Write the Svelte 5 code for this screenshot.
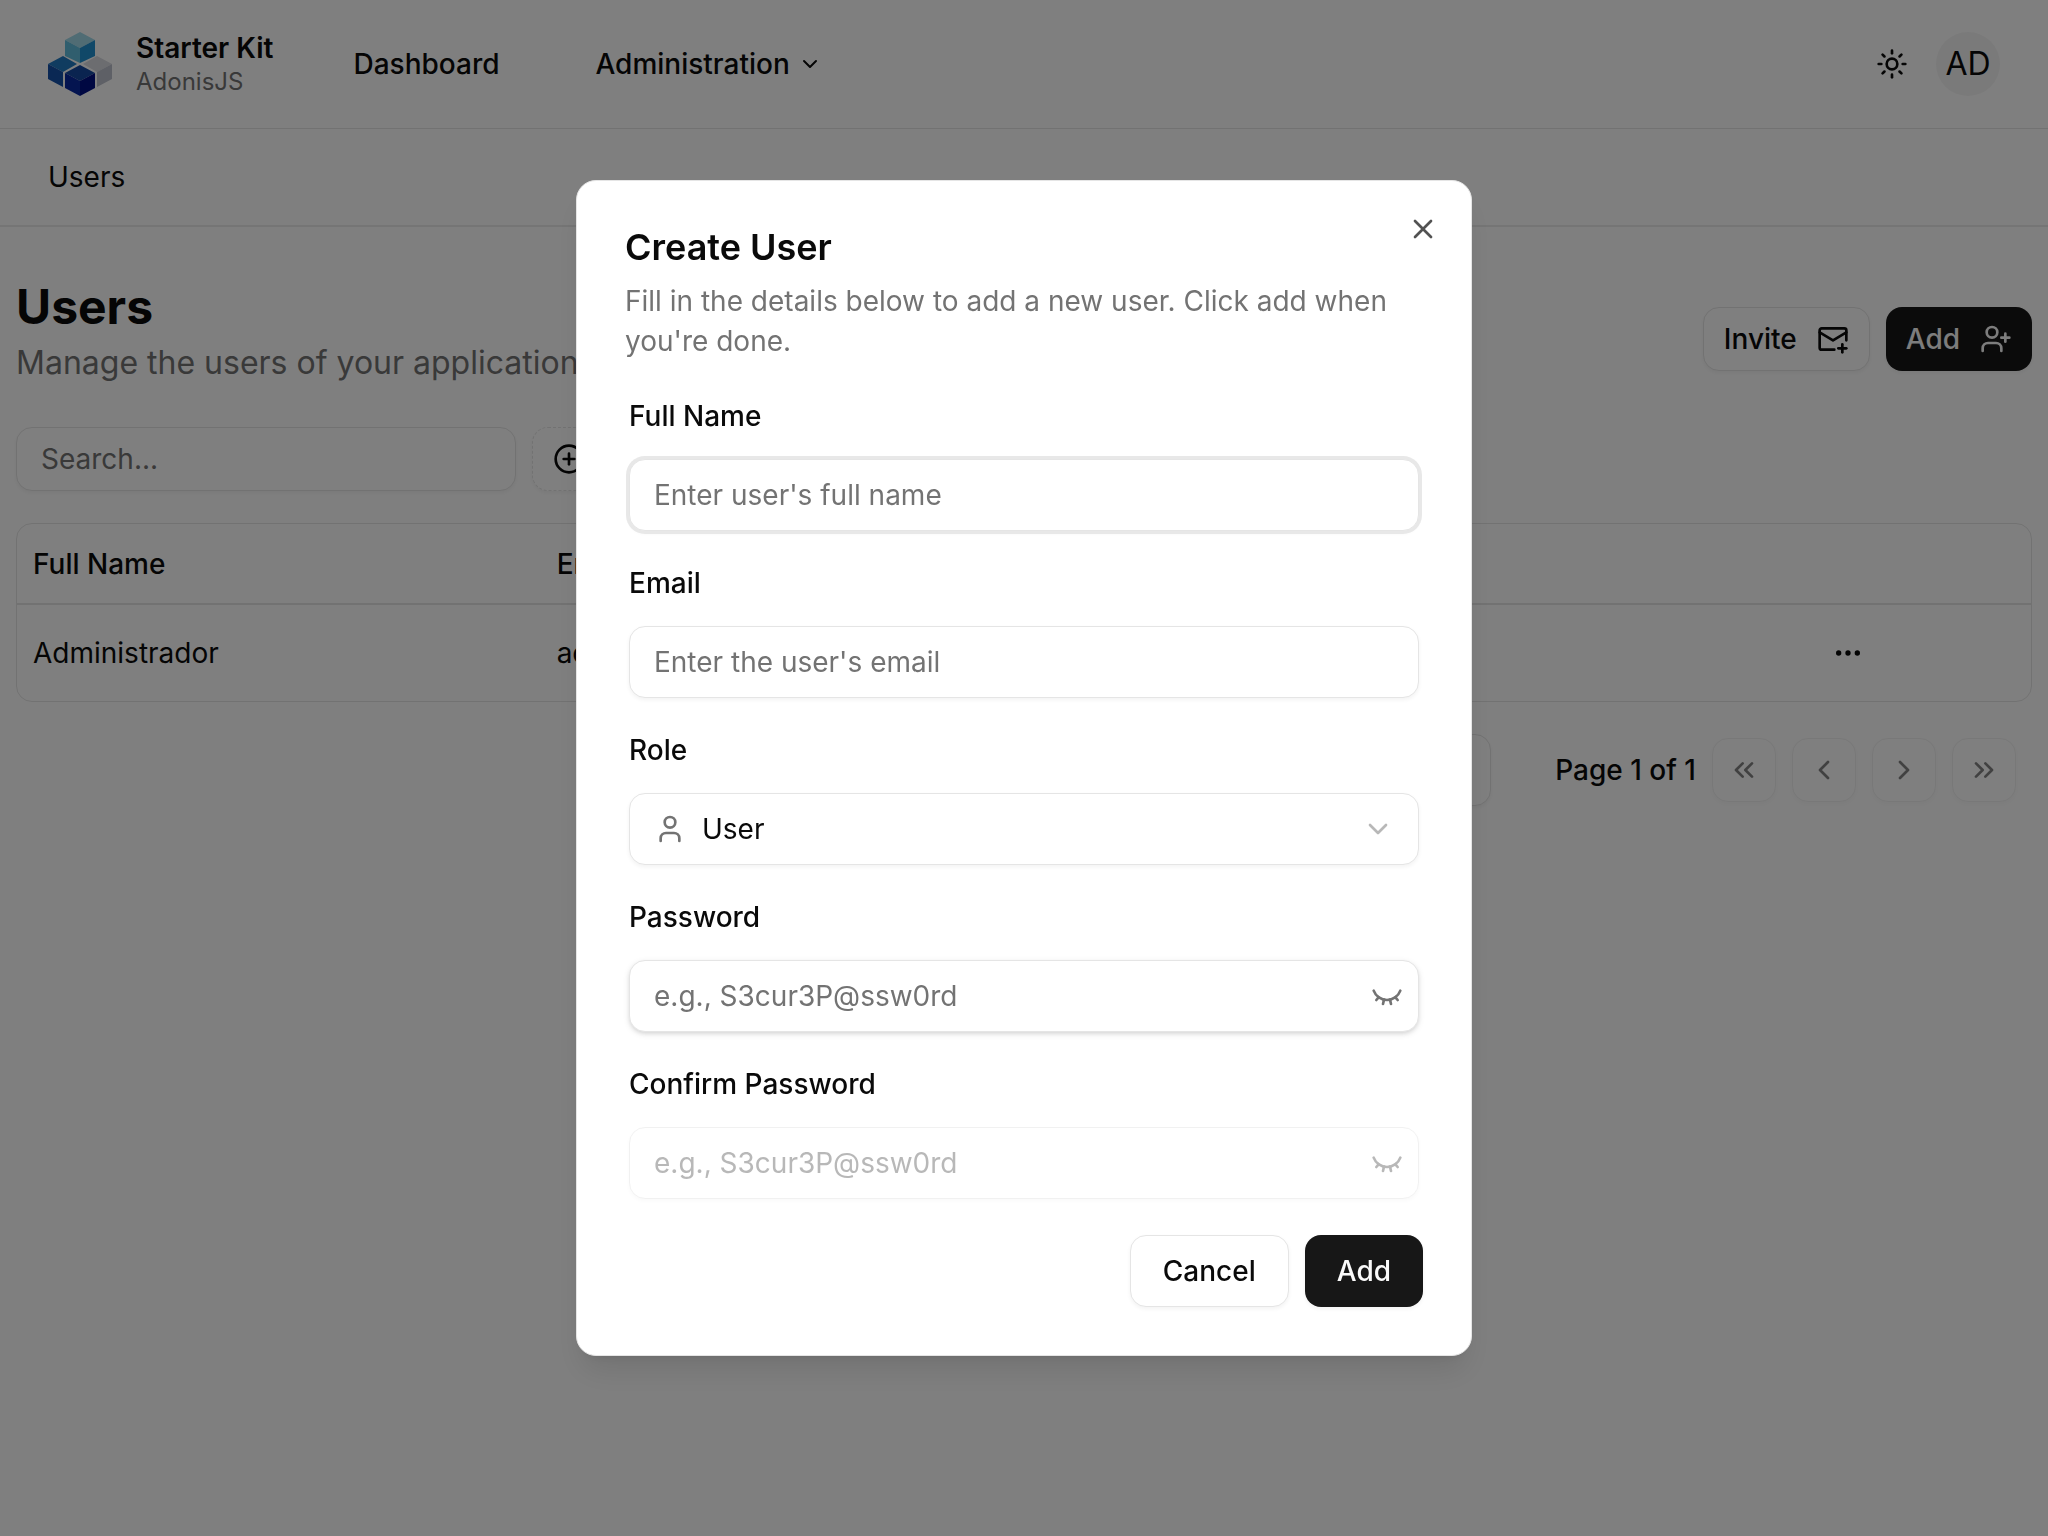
<script lang="ts">
	const navLinks = [
		{ label: 'Dashboard', menu: false },
		{ label: 'Administration', menu: true }
	];

	const users = [{ name: 'Administrador', email: 'admin@adonisjs.com', role: 'Admin' }];

	const pageButtons = [
		{ label: 'First page', paths: ['m11 17-5-5 5-5', 'm18 17-5-5 5-5'] },
		{ label: 'Previous page', paths: ['m15 18-6-6 6-6'] },
		{ label: 'Next page', paths: ['m9 18 6-6-6-6'] },
		{ label: 'Last page', paths: ['m6 17 5-5-5-5', 'm13 17 5-5-5-5'] }
	];

	const icons = {
		chevronDown: ['m6 9 6 6 6-6'],
		sun: [
			'M8 12a4 4 0 1 0 8 0 4 4 0 1 0-8 0',
			'M12 2v2',
			'M12 20v2',
			'm4.93 4.93 1.41 1.41',
			'm17.66 17.66 1.41 1.41',
			'M2 12h2',
			'M20 12h2',
			'm6.34 17.66-1.41 1.41',
			'm19.07 4.93-1.41 1.41'
		],
		mailPlus: [
			'M22 13V5.500a1.500 1.500 0 0 0-1.500-1.500H3.500a1.500 1.500 0 0 0-1.500 1.500V18.500a1.500 1.500 0 0 0 1.500 1.500H13',
			'm22 7-10 6L2 7',
			'M19 16v6',
			'M16 19h6'
		],
		userPlus: [
			'M16 21v-2a4 4 0 0 0-4-4H6a4 4 0 0 0-4 4v2',
			'M5 7a4 4 0 1 0 8 0 4 4 0 1 0-8 0',
			'M19 8v6',
			'M22 11h-6'
		],
		user: ['M19 21v-2a4 4 0 0 0-4-4H9a4 4 0 0 0-4 4v2', 'M8 7a4 4 0 1 0 8 0 4 4 0 1 0-8 0'],
		circlePlus: ['M2 12a10 10 0 1 0 20 0 10 10 0 1 0-20 0', 'M8 12h8', 'M12 8v8'],
		ellipsis: [
			'M11 12a1 1 0 1 0 2 0 1 1 0 1 0-2 0',
			'M18 12a1 1 0 1 0 2 0 1 1 0 1 0-2 0',
			'M4 12a1 1 0 1 0 2 0 1 1 0 1 0-2 0'
		],
		eyeClosed: [
			'm15 18-.722-3.25',
			'M2 8a10.645 10.645 0 0 0 20 0',
			'm20 15-1.726-2.05',
			'm4 15 1.726-2.05',
			'm9 18 .722-3.25'
		],
		x: ['M18 6 6 18', 'm6 6 12 12']
	};

	let open = $state(true);
	let role = $state('User');
	let password = $state('');
	let showPassword = $state(false);
</script>

{#snippet icon(paths: string[], small = false)}
	<svg class="icon" class:small viewBox="0 0 24 24" aria-hidden="true">
		{#each paths as d}
			<path {d} />
		{/each}
	</svg>
{/snippet}

<header class="topbar">
	<a class="brand" href="/">
		<svg class="logo" viewBox="0 0 64 64" aria-hidden="true">
			<path fill="#a0d8e8" d="M32 0l15 8-15 8-15-8z" />
			<path fill="#60bcdc" d="M17 8l15 8v15l-15-7z" />
			<path fill="#2090d0" d="M47 8l-15 8v15l15-7z" />
			<path fill="#2078c0" d="M15 24l14 8-14 8-15-8z" />
			<path fill="#1450a8" d="M0 32l15 8v15L0 47z" />
			<path fill="#d8dae0" d="M49 24l15 8-15 8-14-8z" />
			<path fill="#bcc0cc" d="M64 32l-15 8v15l15-8z" />
			<path fill="#1448a0" d="M32 33l15 8-15 8-15-8z" />
			<path fill="#0828a0" d="M17 41l15 8v15l-15-8z" />
			<path fill="#001084" d="M47 41l-15 8v15l15-8z" />
		</svg>
		<span class="brand-text">
			<strong>Starter Kit</strong>
			<small>AdonisJS</small>
		</span>
	</a>
	<nav>
		{#each navLinks as link}
			{#if link.menu}
				<button class="nav-item">
					{link.label}
					{@render icon(icons.chevronDown, true)}
				</button>
			{:else}
				<a class="nav-item" href="/dashboard">{link.label}</a>
			{/if}
		{/each}
	</nav>
	<div class="account">
		<button class="icon-button" aria-label="Toggle theme">{@render icon(icons.sun)}</button>
		<button class="avatar">AD</button>
	</div>
</header>

<div class="breadcrumb">Users</div>

<main>
	<div class="page-header">
		<div>
			<h1>Users</h1>
			<p>Manage the users of your application</p>
		</div>
		<div class="actions">
			<button class="btn compact">Invite {@render icon(icons.mailPlus)}</button>
			<button class="btn compact primary" onclick={() => (open = true)}>
				Add {@render icon(icons.userPlus)}
			</button>
		</div>
	</div>

	<div class="toolbar">
		<input class="input search" type="text" placeholder="Search..." aria-label="Search" />
		<button class="btn compact dashed">{@render icon(icons.circlePlus)} Role</button>
	</div>

	<div class="table-wrap">
		<table>
			<thead>
				<tr>
					<th class="col-name">Full Name</th>
					<th class="col-email">Email</th>
					<th>Role</th>
					<th class="col-actions" aria-label="Actions"></th>
				</tr>
			</thead>
			<tbody>
				{#each users as user}
					<tr>
						<td>{user.name}</td>
						<td>{user.email}</td>
						<td>{user.role}</td>
						<td>
							<button class="icon-button" aria-label="Open menu">{@render icon(icons.ellipsis)}</button>
						</td>
					</tr>
				{/each}
			</tbody>
		</table>
	</div>

	<div class="pagination">
		<select class="input page-size" aria-label="Rows per page">
			<option>10</option>
			<option>20</option>
		</select>
		<span class="page-count">Page 1 of 1</span>
		{#each pageButtons as button}
			<button class="btn page-button" aria-label={button.label} disabled>
				{@render icon(button.paths)}
			</button>
		{/each}
	</div>
</main>

{#if open}
	<div class="overlay">
		<div class="dialog" role="dialog" aria-modal="true" aria-labelledby="dialog-title">
			<button class="close" aria-label="Close" onclick={() => (open = false)}>
				{@render icon(icons.x)}
			</button>
			<h2 id="dialog-title">Create User</h2>
			<p class="description">
				Fill in the details below to add a new user. Click add when you're done.
			</p>

			<form id="user-form" onsubmit={(e) => e.preventDefault()}>
				<div class="field">
					<label for="full-name">Full Name</label>
					<input class="input active" id="full-name" type="text" placeholder="Enter user's full name" />
				</div>
				<div class="field">
					<label for="email">Email</label>
					<input class="input" id="email" type="email" placeholder="Enter the user's email" />
				</div>
				<div class="field">
					<label for="role">Role</label>
					<div class="control">
						<span class="lead">{@render icon(icons.user)}</span>
						<select class="input with-lead" id="role" bind:value={role}>
							<option>User</option>
							<option>Admin</option>
						</select>
						<span class="trail faded">{@render icon(icons.chevronDown)}</span>
					</div>
				</div>
				<div class="field">
					<label for="password">Password</label>
					<div class="control">
						<input
							class="input raised"
							id="password"
							type={showPassword ? 'text' : 'password'}
							placeholder="e.g., S3cur3P@ssw0rd"
							bind:value={password}
						/>
						<button
							class="trail toggle"
							type="button"
							aria-label="Show password"
							onclick={() => (showPassword = !showPassword)}
						>
							{@render icon(icons.eyeClosed)}
						</button>
					</div>
				</div>
				<div class="field">
					<label for="confirm">Confirm Password</label>
					<div class="control">
						<input
							class="input"
							id="confirm"
							type="password"
							placeholder="e.g., S3cur3P@ssw0rd"
							disabled={!password}
						/>
						<button
							class="trail toggle"
							class:faded={!password}
							type="button"
							aria-label="Show confirmation"
							disabled={!password}
						>
							{@render icon(icons.eyeClosed)}
						</button>
					</div>
				</div>
			</form>

			<div class="dialog-footer">
				<button class="btn" type="button" onclick={() => (open = false)}>Cancel</button>
				<button class="btn primary" type="submit" form="user-form">Add</button>
			</div>
		</div>
	</div>
{/if}

<style>
	:global(body) {
		--foreground: #0a0a0a;
		--muted: #737373;
		--border: #e5e5e5;
		--primary: #171717;
		margin: 0;
		background: #fff;
		color: var(--foreground);
		font-family: Inter, 'Liberation Sans', sans-serif;
		font-size: 28px;
		font-optical-sizing: none;
		line-height: 40px;
	}

	button,
	input,
	select {
		box-sizing: border-box;
		margin: 0;
		font: inherit;
		font-optical-sizing: inherit;
		color: inherit;
	}

	button {
		padding: 0;
		border: none;
		background: none;
		cursor: pointer;
	}

	.icon {
		display: block;
		flex-shrink: 0;
		width: 32px;
		height: 32px;
		fill: none;
		stroke: currentColor;
		stroke-width: 2;
		stroke-linecap: round;
		stroke-linejoin: round;
	}

	.icon.small {
		width: 24px;
		height: 24px;
	}

	.topbar {
		display: flex;
		align-items: center;
		height: 128px;
		padding: 0 48px;
		border-bottom: 1px solid var(--border);
	}

	.brand {
		display: flex;
		align-items: center;
		gap: 24px;
		color: inherit;
		text-decoration: none;
	}

	.logo {
		width: 64px;
		height: 64px;
	}

	.brand-text {
		display: grid;
	}

	.brand-text strong {
		font-weight: 600;
		line-height: 36px;
	}

	.brand-text small {
		font-size: 24px;
		line-height: 32px;
		color: var(--muted);
	}

	nav {
		display: flex;
		gap: 32px;
		margin-left: 48px;
	}

	.nav-item {
		display: flex;
		align-items: center;
		gap: 8px;
		padding: 0 32px;
		font-weight: 500;
		color: inherit;
		text-decoration: none;
	}

	.account {
		display: flex;
		align-items: center;
		gap: 12px;
		margin-left: auto;
	}

	.icon-button {
		display: flex;
		align-items: center;
		justify-content: center;
		width: 64px;
		height: 64px;
	}

	.avatar {
		width: 64px;
		height: 64px;
		border-radius: 50%;
		background: #f5f5f5;
		font-size: 32px;
	}

	.breadcrumb {
		padding: 28px 48px;
		border-bottom: 2px solid #ebebeb;
	}

	main {
		padding: 48px 16px;
	}

	.page-header {
		display: flex;
		align-items: flex-end;
		justify-content: space-between;
	}

	h1 {
		margin: 0;
		font-size: 48px;
		font-weight: 700;
		line-height: 64px;
	}

	.page-header p {
		margin: 0;
		font-size: 32px;
		line-height: 48px;
		color: var(--muted);
	}

	.actions {
		display: flex;
		gap: 16px;
		padding-bottom: 16px;
	}

	.btn {
		display: flex;
		align-items: center;
		justify-content: center;
		height: 72px;
		padding: 0 32px;
		border: 1px solid var(--border);
		border-radius: 16px;
		background: #fff;
		box-shadow: 0 2px 4px rgba(0, 0, 0, 0.05);
		font-weight: 500;
	}

	.btn.compact {
		gap: 20px;
		height: 64px;
		padding: 0 20px;
	}

	.btn.primary {
		border: none;
		background: var(--primary);
		color: #fafafa;
	}

	.btn.dashed {
		border-style: dashed;
	}

	.input {
		width: 100%;
		height: 72px;
		padding: 0 24px;
		border: 1px solid var(--border);
		border-radius: 16px;
		outline: none;
		background: #fff;
		box-shadow: 0 2px 4px rgba(0, 0, 0, 0.05);
		appearance: none;
	}

	.input::placeholder {
		color: var(--muted);
		opacity: 1;
	}

	.input:disabled {
		opacity: 0.5;
	}

	.input.active {
		box-shadow:
			0 0 0 3px #e8e8e8,
			0 2px 4px rgba(0, 0, 0, 0.05);
	}

	.input.raised {
		box-shadow:
			0 2px 6px rgba(0, 0, 0, 0.1),
			0 2px 4px -1px rgba(0, 0, 0, 0.1);
	}

	.toolbar {
		display: flex;
		gap: 16px;
		margin: 40px 0 32px;
	}

	.input.search {
		width: 500px;
		height: 64px;
	}

	.table-wrap {
		border: 1px solid var(--border);
		border-radius: 16px;
	}

	table {
		width: 100%;
		border-collapse: separate;
		border-spacing: 0;
		table-layout: fixed;
	}

	th,
	td {
		box-sizing: border-box;
		padding: 0 16px;
		text-align: left;
	}

	th {
		height: 81px;
		border-bottom: 2px solid var(--border);
		font-weight: 500;
	}

	td {
		height: 96px;
	}

	.col-name {
		width: 26%;
	}

	.col-email {
		width: 40%;
	}

	.col-actions {
		width: 231px;
	}

	.pagination {
		display: flex;
		align-items: center;
		justify-content: flex-end;
		gap: 16px;
		margin-top: 32px;
		padding-right: 16px;
	}

	.input.page-size {
		width: 140px;
	}

	.page-count {
		margin-left: 48px;
		font-weight: 500;
	}

	.btn.page-button {
		width: 64px;
		height: 64px;
		padding: 0;
		opacity: 0.5;
	}

	.overlay {
		position: fixed;
		inset: 0;
		display: flex;
		align-items: center;
		justify-content: center;
		background: rgba(0, 0, 0, 0.5);
	}

	.dialog {
		position: relative;
		box-sizing: border-box;
		width: 100%;
		max-width: 896px;
		padding: 48px;
		border: 1px solid var(--border);
		border-radius: 20px;
		background: #fff;
		box-shadow:
			0 20px 30px -6px rgba(0, 0, 0, 0.1),
			0 8px 12px -8px rgba(0, 0, 0, 0.1);
	}

	.close {
		position: absolute;
		top: 32px;
		right: 32px;
		opacity: 0.7;
	}

	h2 {
		margin: 0;
		font-size: 36px;
		font-weight: 600;
		line-height: 36px;
	}

	.description {
		margin: 16px 0 32px;
		color: var(--muted);
	}

	form {
		display: grid;
		gap: 33px;
		padding: 4px;
	}

	.field {
		display: grid;
		gap: 24px;
	}

	.field label {
		font-weight: 500;
		line-height: 38px;
	}

	.control {
		position: relative;
	}

	.lead,
	.trail {
		position: absolute;
		top: 20px;
		color: var(--muted);
	}

	.lead {
		left: 25px;
	}

	.trail {
		right: 25px;
		pointer-events: none;
	}

	.trail.toggle {
		right: 16px;
		pointer-events: auto;
	}

	.faded {
		opacity: 0.5;
	}

	.input.with-lead {
		padding-left: 72px;
	}

	.dialog-footer {
		display: flex;
		justify-content: flex-end;
		gap: 16px;
		margin-top: 32px;
	}
</style>
